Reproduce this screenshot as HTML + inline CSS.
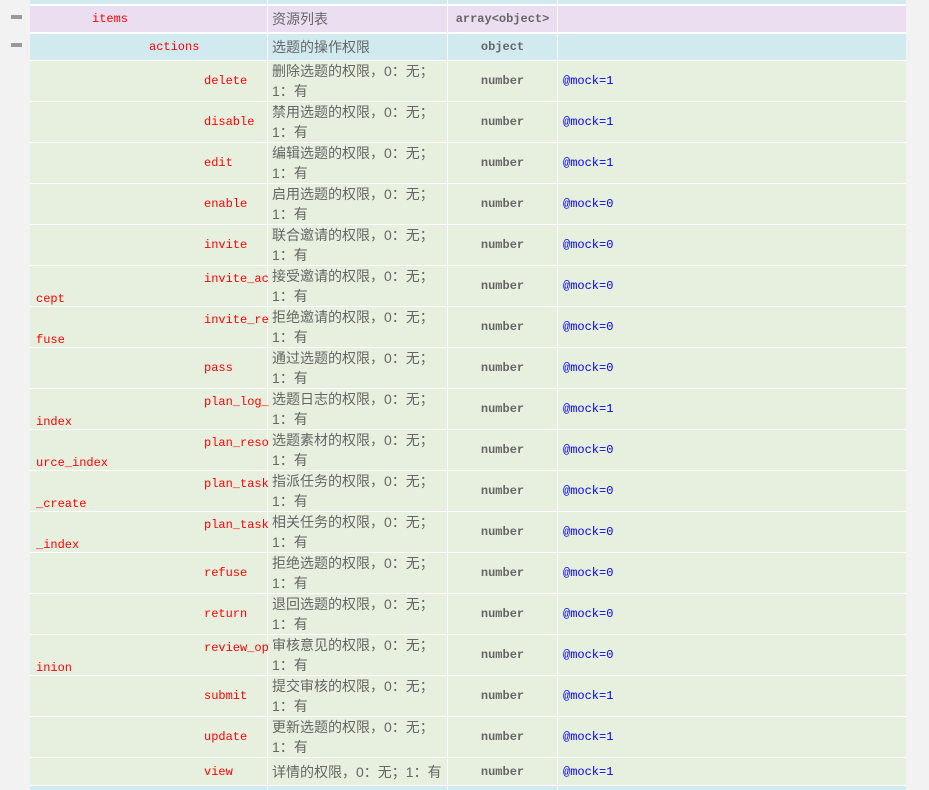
<!DOCTYPE html>
<html><head><meta charset="utf-8"><style>
body{margin:0;width:929px;height:788px;background:#f2f2f2;overflow:hidden;position:relative;font-family:"Liberation Mono",monospace}
.bg{position:absolute;left:30px;top:0;width:876px;height:788px;background:#fff}
.r{position:absolute;left:30px;width:876px;display:flex}
.c{box-sizing:border-box;border-right:1px solid #fff;position:relative}
.n{width:238px;color:#f00;font-size:12px}
.d{width:180px;color:#666;font-size:14px;font-family:"Liberation Sans","Noto Sans CJK SC",sans-serif;padding-left:4px;line-height:20px;display:flex;align-items:center}
.t{width:110px;color:#666;font-size:12px;font-weight:bold;display:flex;align-items:center;justify-content:center}
.m{flex:1;border-right:none;color:#00f;font-size:12px;padding-left:5px;display:flex;align-items:center}
.p{background:#ecdef1}.b{background:#d1eaf0}.g{background:#e7f0df}
.s{position:absolute;white-space:nowrap}
.mi{position:absolute;left:11px;width:11px;height:4px;background:#999}
</style></head><body>
<div class="bg"></div>
<div class="r b" style="top:0;height:4px"><div class="c n"></div><div class="c d"></div><div class="c t"></div><div class="c m"></div></div>
<div class="mi" style="top:15px"></div><div class="mi" style="top:43px"></div>
<div class="r p" style="top:6px;height:26px"><div class="c n"><span class="s" style="left:62px;top:6px">items</span></div><div class="c d">资源列表</div><div class="c t">array&lt;object&gt;</div><div class="c m"></div></div>
<div class="r b" style="top:34px;height:26px"><div class="c n"><span class="s" style="left:119px;top:6px">actions</span></div><div class="c d">选题的操作权限</div><div class="c t">object</div><div class="c m"></div></div>
<div id="rows"></div>
<script>
var R=[["delete",,"删除选题","1"],["disable",,"禁用选题","1"],["edit",,"编辑选题","1"],["enable",,"启用选题","0"],["invite",,"联合邀请","0"],["invite_ac","cept","接受邀请","0"],["invite_re","fuse","拒绝邀请","0"],["pass",,"通过选题","0"],["plan_log_","index","选题日志","1"],["plan_reso","urce_index","选题素材","0"],["plan_task","_create","指派任务","0"],["plan_task","_index","相关任务","0"],["refuse",,"拒绝选题","0"],["return",,"退回选题","0"],["review_op","inion","审核意见","0"],["submit",,"提交审核","1"],["update",,"更新选题","1"],["view",,"详情","1"]];
var h="";R.forEach(function(x,i){var top=61+i*41,ht=i==17?27:40;var nm;
if(x[1]){nm='<span class="s" style="left:174px;top:6px">'+x[0]+'</span><span class="s" style="left:6px;top:26px">'+x[1]+'</span>';}
else nm='<span class="s" style="left:174px;top:'+(ht/2-7)+'px">'+x[0]+'</span>';
var d=i==17?"详情的权限，0：无；1：有":x[2]+"的权限，0：无；<br>1：有";
h+='<div class="r g" style="top:'+top+'px;height:'+ht+'px"><div class="c n">'+nm+'</div><div class="c d"><div>'+d+'</div></div><div class="c t">number</div><div class="c m">@mock='+x[3]+'</div></div>';});
h+='<div class="r b" style="top:786px;height:4px"><div class="c n"></div><div class="c d"></div><div class="c t"></div><div class="c m"></div></div>';
document.getElementById("rows").innerHTML=h;
</script>
</body></html>
